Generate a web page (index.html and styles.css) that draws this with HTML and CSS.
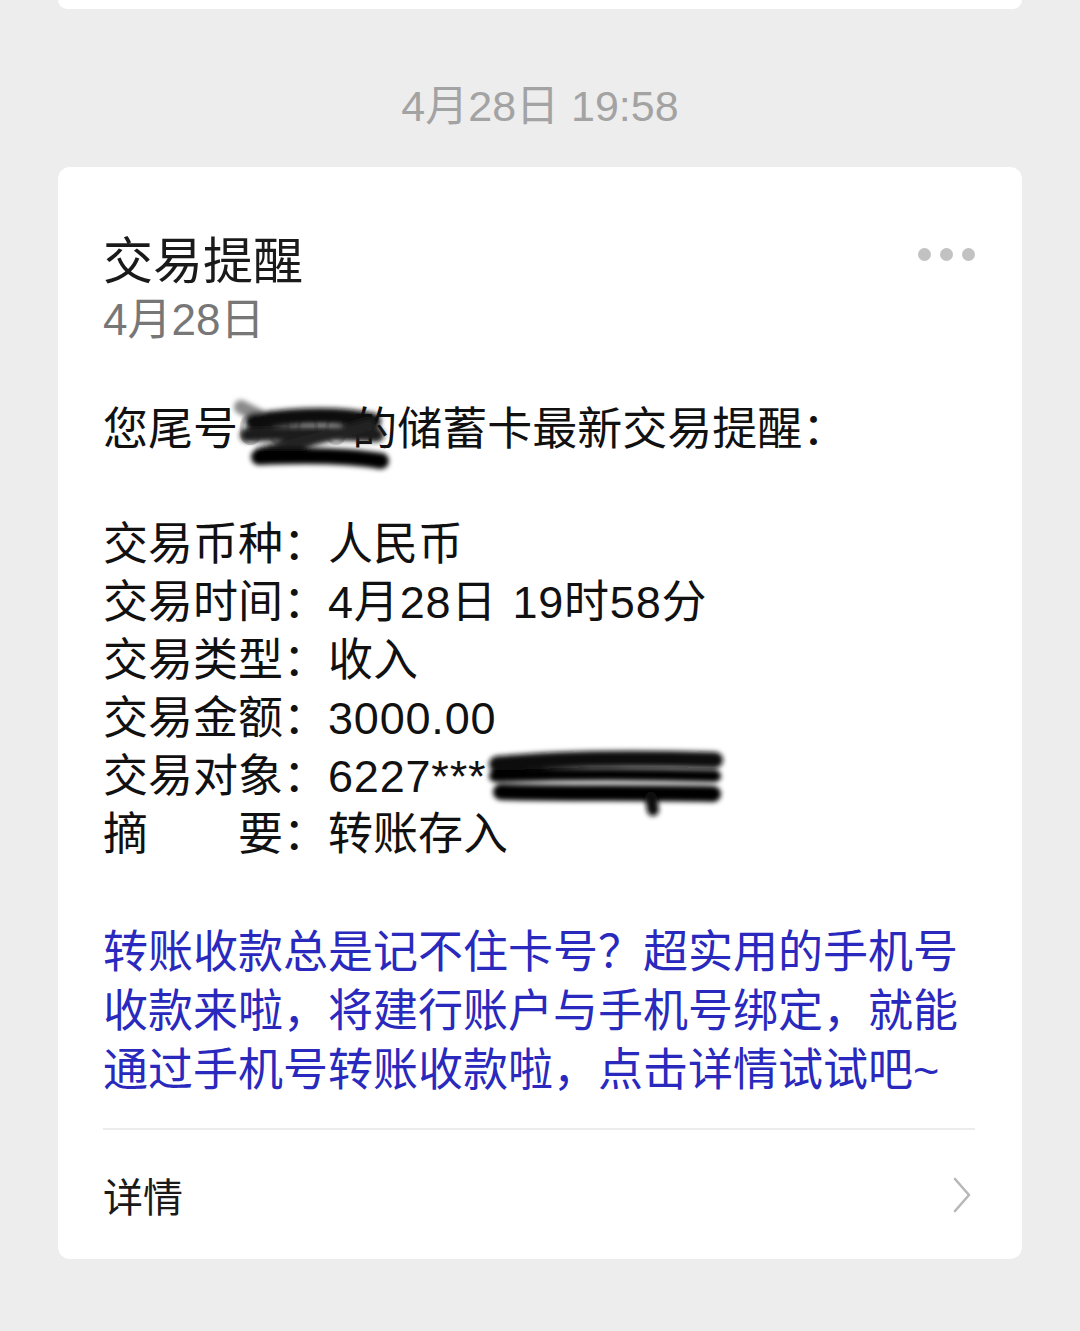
FILE: index.html
```html
<!DOCTYPE html>
<html lang="zh-CN">
<head>
  <meta charset="UTF-8" />
  <meta name="viewport" content="width=device-width, initial-scale=1.0"/>
  <title>交易提醒</title>
  <link rel="stylesheet" href="styles.css">
</head>
<body>
  <div class="prev-card"></div>
  <div class="stamp">4月28日 19:58</div>
  <section class="card">
    <div class="card-head">
      <div>
        <h1 class="title">交易提醒</h1>
        <div class="date">4月28日</div>
      </div>
      <div class="more"><i></i><i></i><i></i></div>
    </div>

    <p class="intro">您尾号<span class="hidden-no">0000</span>的储蓄卡最新交易提醒：
      <svg class="scribble s1" width="170" height="84" viewBox="0 0 170 84">
        <defs><filter id="b1" x="-20%" y="-40%" width="140%" height="180%"><feGaussianBlur stdDeviation="2.6"/></filter></defs>
        <g filter="url(#b1)" fill="none" stroke-linecap="round">
          <path d="M14 12 L34 22" stroke="#8a8a8a" stroke-width="14"/>
          <path d="M26 26 C70 20 110 18 146 26" stroke="#111" stroke-width="16"/>
          <path d="M20 40 C70 38 110 38 150 40" stroke="#1a1a1a" stroke-width="14"/>
          <path d="M142 30 C100 42 60 50 34 58" stroke="#222" stroke-width="12"/>
          <path d="M32 62 C80 60 120 60 154 66" stroke="#000" stroke-width="16"/>
        </g>
      </svg>
    </p>

    <div class="rows">
      <div class="row"><span class="label">交易币种：</span><span>人民币</span></div>
      <div class="row"><span class="label">交易时间：</span><span class="num">4月28日 19时58分</span></div>
      <div class="row"><span class="label">交易类型：</span><span>收入</span></div>
      <div class="row"><span class="label">交易金额：</span><span class="num">3000.00</span></div>
      <div class="row"><span class="label">交易对象：</span><span class="num">6227***</span>
        <svg class="scribble s2" width="260" height="84" viewBox="0 0 260 84">
          <defs><filter id="b2" x="-10%" y="-40%" width="120%" height="180%"><feGaussianBlur stdDeviation="2.8"/></filter></defs>
          <g filter="url(#b2)" fill="none" stroke-linecap="round">
            <path d="M18 20 C80 14 170 14 236 16" stroke="#111" stroke-width="16"/>
            <path d="M16 32 C90 30 170 30 236 32" stroke="#000" stroke-width="12"/>
            <path d="M22 48 C90 50 170 48 234 50" stroke="#000" stroke-width="16"/>
            <path d="M172 54 L174 66" stroke="#111" stroke-width="12"/>
          </g>
        </svg>
      </div>
      <div class="row"><span class="label">摘　　要：</span><span>转账存入</span></div>
    </div>

    <p class="promo">转账收款总是记不住卡号？超实用的手机号收款来啦，将建行账户与手机号绑定，就能通过手机号转账收款啦，点击详情试试吧~</p>

    <a class="detail" href="#">
      <span>详情</span>
      <svg width="20" height="36" viewBox="0 0 20 36"><polyline points="3,2 17,18 3,34" fill="none" stroke="#b8b8b8" stroke-width="2.6" stroke-linecap="round" stroke-linejoin="round"/></svg>
    </a>
  </section>
</body>
</html>
```

FILE: styles.css
```css
* { margin: 0; padding: 0; box-sizing: border-box; }
body {
  background: #ededed;
  font-family: "Liberation Sans", "Noto Sans CJK SC", sans-serif;
  color: #111;
  height: 1331px;
  overflow: hidden;
}
.prev-card { height: 9px; margin: 0 58px; background: #fff; border-radius: 0 0 12px 12px; }
.stamp { text-align: center; color: #a3a3a3; font-size: 43px; line-height: 50px; margin-top: 72px; }
.card { margin: 36px 58px 0; background: #fff; border-radius: 12px; padding: 66px 47px 0 45px; }
.card-head { display: flex; justify-content: space-between; }
.title { font-size: 50px; font-weight: 400; line-height: 58px; color: #1a1a1a; }
.date { font-size: 44px; line-height: 58px; color: #777; }
.more { display: flex; gap: 9px; margin-top: 15px; }
.more i { display: block; width: 13px; height: 13px; border-radius: 50%; background: #c2c2c2; }
.intro { position: relative; font-size: 45px; line-height: 58px; margin-top: 52px; }
.hidden-no { color: #d0d0d0; letter-spacing: 3.5px; }
.scribble { position: absolute; }
.s1 { left: 124px; top: -6px; }
.rows { margin-top: 57px; font-size: 45px; line-height: 58px; }
.row { position: relative; display: flex; white-space: nowrap; }
.num { letter-spacing: 0.8px; word-spacing: 2px; }
.s2 { left: 376px; top: -4px; }
.promo { margin-top: 59px; font-size: 45px; line-height: 59px; color: #2a29bd; padding-right: 10px; }
.detail {
  display: flex; justify-content: space-between; align-items: center;
  height: 131px; margin-top: 28px; border-top: 2px solid #ececec;
  color: #1a1a1a; text-decoration: none; font-size: 40px; padding-right: 3px;
}
```
